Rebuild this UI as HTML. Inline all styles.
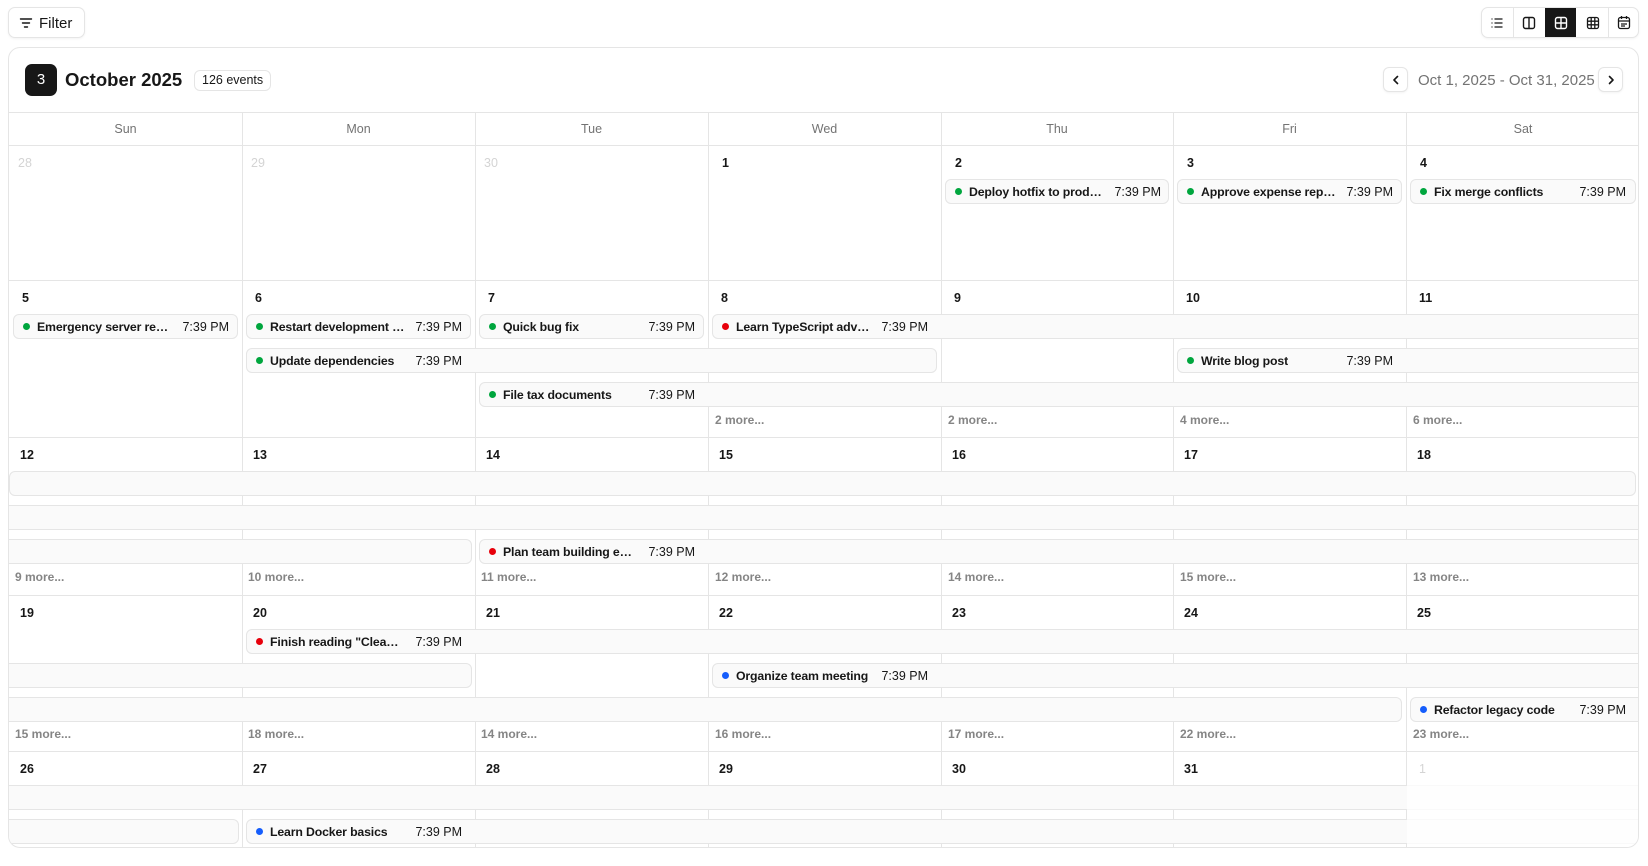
<!DOCTYPE html>
<html><head><meta charset="utf-8"><style>
*{box-sizing:border-box;margin:0;padding:0}
body{width:1648px;height:866px;background:#fff;font-family:"Liberation Sans",sans-serif;color:#171717;position:relative;overflow:hidden}
.abs{position:absolute}
.btn{position:absolute;border:1px solid #e5e5e5;border-radius:7px;background:#fff;box-shadow:0 1px 2px rgba(0,0,0,.05)}
#card{position:absolute;left:8px;top:47px;width:1631px;height:801px;border:1px solid #e5e5e5;border-radius:12px;overflow:hidden}
.hl{position:absolute;left:0;width:1631px;height:1px;background:#e5e5e5}
.vl{position:absolute;top:65px;width:1px;height:740px;background:#e5e5e5}
.dh{position:absolute;top:65px;height:33px;line-height:33px;text-align:center;font-size:12.5px;color:#737373}
.dn{position:absolute;font-size:12.5px;font-weight:bold;line-height:16px}
.dn.g{color:#d4d4d4;font-weight:normal}
.bar{position:absolute;height:25px;background:#fafafa;border:1px solid #e5e5e5;border-radius:6px}
.bar.sl{border-top-left-radius:0;border-bottom-left-radius:0}
.bar.sr{border-top-right-radius:0;border-bottom-right-radius:0}
.ct{position:absolute;left:9px;top:0;height:23px;width:206px;display:flex;align-items:center;font-size:12.5px;white-space:nowrap}
.dot{width:7px;height:7px;border-radius:50%;flex:none;margin-right:7px}
.t{font-weight:bold;font-size:12.3px;letter-spacing:-0.15px;overflow:hidden;text-overflow:ellipsis;flex:0 1 auto;min-width:0}
.tm{margin-left:auto;padding-left:10px;flex:none}
.gr{background:#00a63e}.rd{background:#e7000b}.bl{background:#155dfc}
.more{position:absolute;font-size:12px;font-weight:bold;color:#858585}
</style></head><body>

<div class="btn" style="left:8px;top:7px;width:77px;height:31px">
<svg class="abs" style="left:10px;top:8px" width="14" height="14" viewBox="0 0 14 14" fill="none" stroke="#171717" stroke-width="1.4" stroke-linecap="round"><path d="M1.5 3h11M3.5 7h7M5.5 11h3"/></svg>
<span class="abs" style="left:30px;top:7px;font-size:15px;font-weight:500;line-height:18px">Filter</span>
</div>

<div class="btn" style="left:1481px;top:7px;width:158px;height:31px;overflow:hidden">
<div class="abs" style="left:31px;top:0;width:1px;height:31px;background:#e5e5e5"></div>
<div class="abs" style="left:63px;top:0;width:31px;height:31px;background:#171717"></div>
<div class="abs" style="left:126px;top:0;width:1px;height:31px;background:#e5e5e5"></div>
<svg class="abs" style="left:8px;top:8px" width="14" height="14" viewBox="0 0 14 14" fill="none" stroke="#171717" stroke-width="1.3"><path d="M4.5 3h8M4.5 7h8M4.5 11h8M1.5 3h1M1.5 7h1M1.5 11h1"/></svg>
<svg class="abs" style="left:40px;top:8px" width="14" height="14" viewBox="0 0 14 14" fill="none" stroke="#171717" stroke-width="1.4"><rect x="1.5" y="1.5" width="11" height="11" rx="2"/><path d="M7 1.5v11"/></svg>
<svg class="abs" style="left:72px;top:8px" width="14" height="14" viewBox="0 0 14 14" fill="none" stroke="#fff" stroke-width="1.4"><rect x="1.5" y="1.5" width="11" height="11" rx="2"/><path d="M7 1.5v11M1.5 7h11"/></svg>
<svg class="abs" style="left:104px;top:8px" width="14" height="14" viewBox="0 0 14 14" fill="none" stroke="#171717" stroke-width="1.3"><rect x="1.5" y="1.5" width="11" height="11" rx="2"/><path d="M5.2 1.5v11M8.8 1.5v11M1.5 5.2h11M1.5 8.8h11"/></svg>
<svg class="abs" style="left:135px;top:7px" width="14" height="15" viewBox="0 0 14 15" fill="none" stroke="#171717" stroke-width="1.3"><rect x="1.5" y="2.5" width="11" height="11" rx="2"/><path d="M4.5 1v3M9.5 1v3M1.5 6h11M4 9h6M4 11h4"/></svg>
</div>

<div id="card">
<div class="abs" style="left:16px;top:16px;width:32px;height:32px;border-radius:7px;background:#171717;color:#fff;font-size:15px;line-height:32px;text-align:center">3</div>
<div class="abs" style="left:56px;top:20px;font-size:18.5px;font-weight:bold;line-height:24px">October 2025</div>
<div class="abs" style="left:185px;top:22px;height:21px;padding:0 7px;border:1px solid #e5e5e5;border-radius:6px;font-size:12.5px;line-height:19px">126 events</div>
<div class="btn" style="left:1374px;top:19px;width:25px;height:25px;border-radius:6px"><svg class="abs" style="left:6px;top:6px" width="12" height="12" viewBox="0 0 12 12" fill="none" stroke="#171717" stroke-width="1.6" stroke-linecap="round" stroke-linejoin="round"><path d="M7.5 2.5L4 6l3.5 3.5"/></svg></div>
<div class="abs" style="left:1409px;top:24px;font-size:15px;line-height:18px;color:#737373">Oct 1, 2025 - Oct 31, 2025</div>
<div class="btn" style="left:1589px;top:19px;width:25px;height:25px;border-radius:6px"><svg class="abs" style="left:6px;top:6px" width="12" height="12" viewBox="0 0 12 12" fill="none" stroke="#171717" stroke-width="1.6" stroke-linecap="round" stroke-linejoin="round"><path d="M4.5 2.5L8 6l-3.5 3.5"/></svg></div>

<div class="hl" style="top:64px"></div>
<div class="hl" style="top:97px"></div>
<div class="hl" style="top:232px"></div>
<div class="hl" style="top:389px"></div>
<div class="hl" style="top:547px"></div>
<div class="hl" style="top:703px"></div>

<div class="vl" style="left:233px"></div>
<div class="vl" style="left:466px"></div>
<div class="vl" style="left:699px"></div>
<div class="vl" style="left:932px"></div>
<div class="vl" style="left:1164px"></div>
<div class="vl" style="left:1397px"></div>

<div class="dh" style="left:0;width:233px">Sun</div>
<div class="dh" style="left:233px;width:233px">Mon</div>
<div class="dh" style="left:466px;width:233px">Tue</div>
<div class="dh" style="left:699px;width:233px">Wed</div>
<div class="dh" style="left:932px;width:232px">Thu</div>
<div class="dh" style="left:1164px;width:233px">Fri</div>
<div class="dh" style="left:1397px;width:234px">Sat</div>

<!-- week1 -->
<div class="dn g" style="left:9px;top:107px">28</div>
<div class="dn g" style="left:242px;top:107px">29</div>
<div class="dn g" style="left:475px;top:107px">30</div>
<div class="dn" style="left:713px;top:107px">1</div>
<div class="dn" style="left:946px;top:107px">2</div>
<div class="dn" style="left:1178px;top:107px">3</div>
<div class="dn" style="left:1411px;top:107px">4</div>
<div class="bar" style="left:936px;top:131px;width:224px"><div class="ct"><span class="dot gr"></span><span class="t">Deploy hotfix to production</span><span class="tm">7:39 PM</span></div></div>
<div class="bar" style="left:1168px;top:131px;width:225px"><div class="ct"><span class="dot gr"></span><span class="t">Approve expense reports</span><span class="tm">7:39 PM</span></div></div>
<div class="bar" style="left:1401px;top:131px;width:226px"><div class="ct"><span class="dot gr"></span><span class="t">Fix merge conflicts</span><span class="tm">7:39 PM</span></div></div>

<!-- week2 -->
<div class="dn" style="left:13px;top:242px">5</div>
<div class="dn" style="left:246px;top:242px">6</div>
<div class="dn" style="left:479px;top:242px">7</div>
<div class="dn" style="left:712px;top:242px">8</div>
<div class="dn" style="left:945px;top:242px">9</div>
<div class="dn" style="left:1177px;top:242px">10</div>
<div class="dn" style="left:1410px;top:242px">11</div>
<div class="bar" style="left:4px;top:266px;width:225px"><div class="ct"><span class="dot gr"></span><span class="t">Emergency server restart</span><span class="tm">7:39 PM</span></div></div>
<div class="bar" style="left:237px;top:266px;width:225px"><div class="ct"><span class="dot gr"></span><span class="t">Restart development server</span><span class="tm">7:39 PM</span></div></div>
<div class="bar" style="left:470px;top:266px;width:225px"><div class="ct"><span class="dot gr"></span><span class="t">Quick bug fix</span><span class="tm">7:39 PM</span></div></div>
<div class="bar sr" style="left:703px;top:266px;width:940px"><div class="ct"><span class="dot rd"></span><span class="t">Learn TypeScript advanced</span><span class="tm">7:39 PM</span></div></div>
<div class="bar" style="left:237px;top:300px;width:691px"><div class="ct"><span class="dot gr"></span><span class="t">Update dependencies</span><span class="tm">7:39 PM</span></div></div>
<div class="bar sr" style="left:1168px;top:300px;width:475px"><div class="ct"><span class="dot gr"></span><span class="t">Write blog post</span><span class="tm">7:39 PM</span></div></div>
<div class="bar sr" style="left:470px;top:334px;width:1173px"><div class="ct"><span class="dot gr"></span><span class="t">File tax documents</span><span class="tm">7:39 PM</span></div></div>
<div class="more" style="left:706px;top:365px">2 more...</div>
<div class="more" style="left:939px;top:365px">2 more...</div>
<div class="more" style="left:1171px;top:365px">4 more...</div>
<div class="more" style="left:1404px;top:365px">6 more...</div>

<!-- week3 -->
<div class="dn" style="left:11px;top:399px">12</div>
<div class="dn" style="left:244px;top:399px">13</div>
<div class="dn" style="left:477px;top:399px">14</div>
<div class="dn" style="left:710px;top:399px">15</div>
<div class="dn" style="left:943px;top:399px">16</div>
<div class="dn" style="left:1175px;top:399px">17</div>
<div class="dn" style="left:1408px;top:399px">18</div>
<div class="bar" style="left:0;top:423px;width:1627px"></div>
<div class="bar sl sr" style="left:-1px;top:457px;width:1640px"></div>
<div class="bar sl" style="left:-1px;top:491px;width:464px"></div>
<div class="bar sr" style="left:470px;top:491px;width:1173px"><div class="ct"><span class="dot rd"></span><span class="t">Plan team building event</span><span class="tm">7:39 PM</span></div></div>
<div class="more" style="left:6px;top:522px">9 more...</div>
<div class="more" style="left:239px;top:522px">10 more...</div>
<div class="more" style="left:472px;top:522px">11 more...</div>
<div class="more" style="left:706px;top:522px">12 more...</div>
<div class="more" style="left:939px;top:522px">14 more...</div>
<div class="more" style="left:1171px;top:522px">15 more...</div>
<div class="more" style="left:1404px;top:522px">13 more...</div>

<!-- week4 -->
<div class="dn" style="left:11px;top:557px">19</div>
<div class="dn" style="left:244px;top:557px">20</div>
<div class="dn" style="left:477px;top:557px">21</div>
<div class="dn" style="left:710px;top:557px">22</div>
<div class="dn" style="left:943px;top:557px">23</div>
<div class="dn" style="left:1175px;top:557px">24</div>
<div class="dn" style="left:1408px;top:557px">25</div>
<div class="bar sr" style="left:237px;top:581px;width:1406px"><div class="ct"><span class="dot rd"></span><span class="t">Finish reading "Clean Code"</span><span class="tm">7:39 PM</span></div></div>
<div class="bar sl" style="left:-1px;top:615px;width:464px"></div>
<div class="bar sr" style="left:703px;top:615px;width:940px"><div class="ct"><span class="dot bl"></span><span class="t">Organize team meeting</span><span class="tm">7:39 PM</span></div></div>
<div class="bar sl" style="left:-1px;top:649px;width:1394px"></div>
<div class="bar sr" style="left:1401px;top:649px;width:240px"><div class="ct"><span class="dot bl"></span><span class="t">Refactor legacy code</span><span class="tm">7:39 PM</span></div></div>
<div class="more" style="left:6px;top:679px">15 more...</div>
<div class="more" style="left:239px;top:679px">18 more...</div>
<div class="more" style="left:472px;top:679px">14 more...</div>
<div class="more" style="left:706px;top:679px">16 more...</div>
<div class="more" style="left:939px;top:679px">17 more...</div>
<div class="more" style="left:1171px;top:679px">22 more...</div>
<div class="more" style="left:1404px;top:679px">23 more...</div>

<!-- week5 -->
<div class="dn" style="left:11px;top:713px">26</div>
<div class="dn" style="left:244px;top:713px">27</div>
<div class="dn" style="left:477px;top:713px">28</div>
<div class="dn" style="left:710px;top:713px">29</div>
<div class="dn" style="left:943px;top:713px">30</div>
<div class="dn" style="left:1175px;top:713px">31</div>
<div class="dn g" style="left:1410px;top:713px">1</div>
<div class="bar sl sr" style="left:-1px;top:737px;width:1640px"></div>
<div class="bar sl" style="left:-1px;top:771px;width:231px"></div>
<div class="bar sr" style="left:237px;top:771px;width:1406px"><div class="ct"><span class="dot bl"></span><span class="t">Learn Docker basics</span><span class="tm">7:39 PM</span></div></div>
<div class="abs" style="left:1398px;top:737px;width:233px;height:70px;background:rgba(255,255,255,.75)"></div>
</div>
</body></html>
